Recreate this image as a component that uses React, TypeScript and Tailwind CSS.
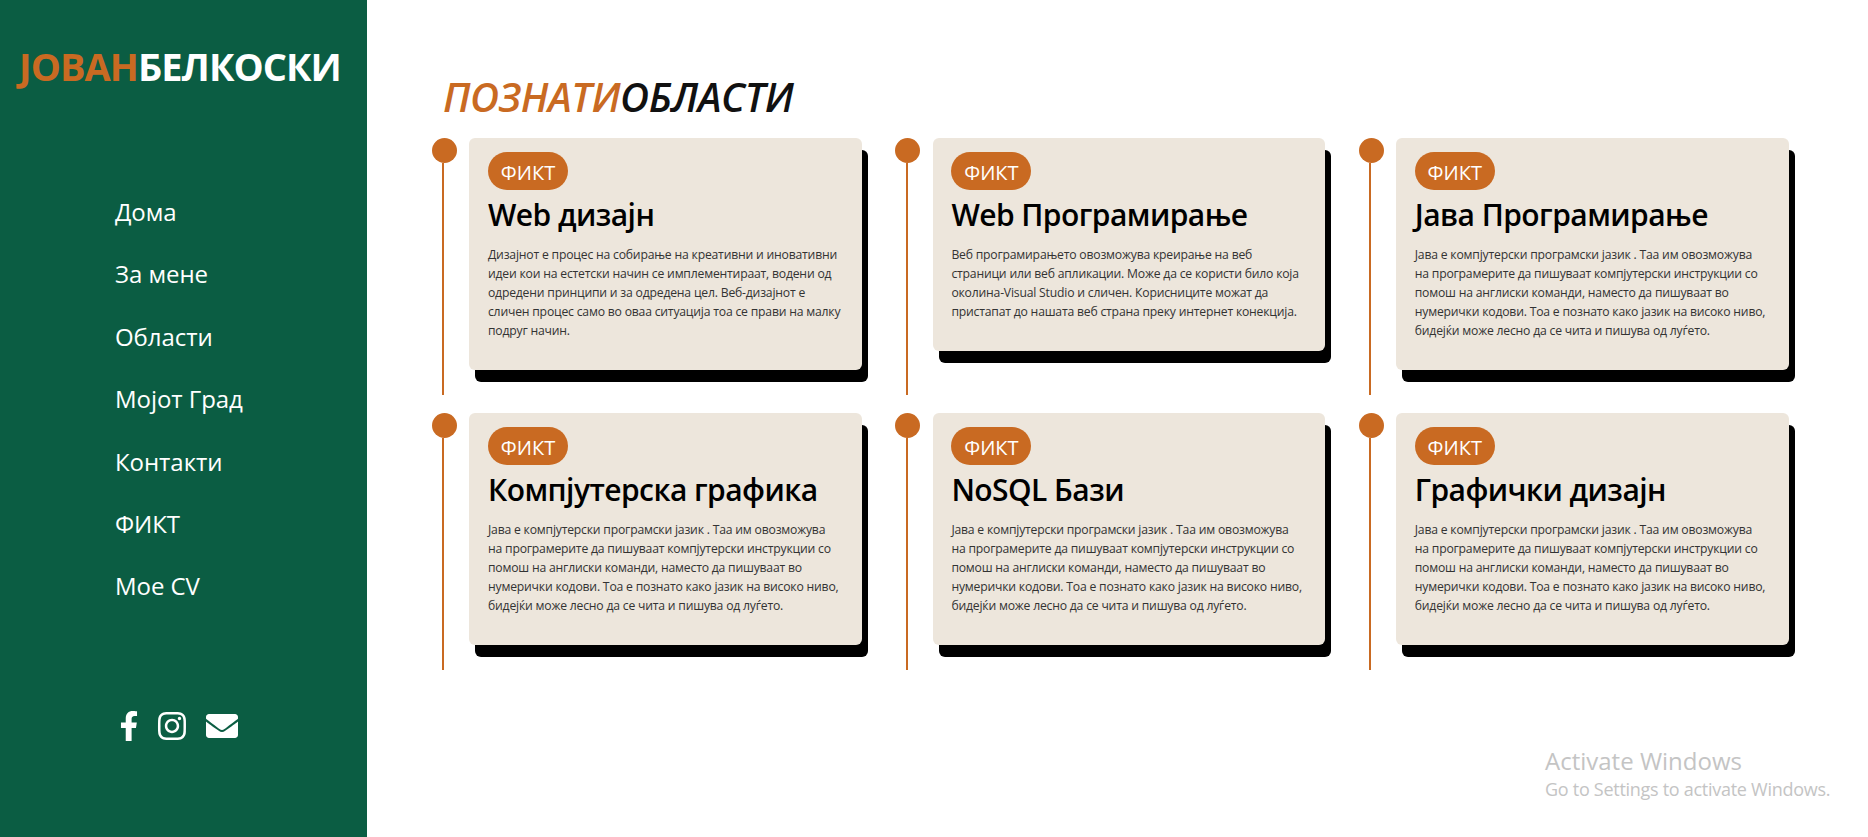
import React from 'react';
import { FaFacebookF, FaInstagram, FaEnvelope } from 'react-icons/fa';

const JAVA_TEXT = 'Јава е компјутерски програмски јазик . Таа им овозможува на програмерите да пишуваат компјутерски инструкции со помош на англиски команди, наместо да пишуваат во нумерички кодови. Тоа е познато како јазик на високо ниво, бидејќи може лесно да се чита и пишува од луѓето.';

const navLinks = ['Дома', 'За мене', 'Области', 'Мојот Град', 'Контакти', 'ФИКТ', 'Мое CV'];

const cards = [
  {
    title: 'Web дизајн',
    text: 'Дизајнот е процес на собирање на креативни и иновативни идеи кои на естетски начин се имплементираат, водени од одредени принципи и за одредена цел. Веб-дизајнот е сличен процес само во оваа ситуација тоа се прави на малку подруг начин.',
  },
  {
    title: 'Web Програмирање',
    text: 'Веб програмирањето овозможува креирање на веб страници или веб апликации. Може да се користи било која околина-Visual Studio и сличен. Корисниците можат да пристапат до нашата веб страна преку интернет конекција.',
  },
  { title: 'Јава Програмирање', text: JAVA_TEXT },
  { title: 'Компјутерска графика', text: JAVA_TEXT },
  { title: 'NoSQL Бази', text: JAVA_TEXT },
  { title: 'Графички дизајн', text: JAVA_TEXT },
];

const AreaCard = ({ title, text }: { title: string; text: string }) => (
  <div className="flex h-[257px] gap-[12.3px]">
    {/* timeline */}
    <div className="flex w-[25px] shrink-0 flex-col">
      <div className="h-[25px] w-[25px] rounded-full bg-[#c96a22]" />
      <div className="ml-[10.4px] w-[2px] flex-1 bg-[#c96a22]" />
    </div>
    <div className="w-[392.7px] self-start rounded-md bg-[#ede6dc] px-[18.7px] pt-[14px] pb-[20px] shadow-[6px_12px_0_#000]">
      <span className="inline-block h-[38px] w-[80px] rounded-[19px] bg-[#c96a22] text-center text-[20px] leading-[41px] text-white">
        ФИКТ
      </span>
      <h3 className="mt-[2px] text-[30px] leading-[45px] font-semibold tracking-[-0.55px] text-black">{title}</h3>
      <p className="mt-[8px] w-[353.5px] pb-[10px] text-[12.2px] leading-[19px] tracking-[-0.2px] text-[#333]">{text}</p>
    </div>
  </div>
);

export default function App() {
  return (
    <div className="relative flex h-[837px] w-full overflow-hidden bg-white font-['Open_Sans','Noto_Sans',sans-serif]">
      <aside className="flex w-[367px] shrink-0 flex-col bg-[#0b5d43]">
        <h1 className="mt-[41px] pl-[19px] text-[38px] leading-[50px] font-bold tracking-[-0.95px] whitespace-nowrap text-white">
          <span className="text-[#c96a22]">JOВАН</span>БЕЛКОСКИ
        </h1>
        <nav className="mt-[90px] flex flex-col pl-[115px]">
          {navLinks.map((link) => (
            <a key={link} className="h-[62.4px] text-[24px] leading-[62px] tracking-[-0.05px] text-white">
              {link}
            </a>
          ))}
        </nav>
        <div className="mt-[92px] flex items-center pl-[119px] text-white">
          <FaFacebookF className="h-[30px] w-[20px]" />
          <FaInstagram className="ml-[17px] h-[32px] w-[32px]" />
          <FaEnvelope className="ml-[18px] h-[32px] w-[32px]" />
        </div>
      </aside>

      <main className="flex-1 pl-[65px]">
        <h2 className="mt-[72px] pl-[11px] text-[40px] leading-[50px] font-semibold tracking-[-0.45px] text-[#111] italic">
          <span className="text-[#c96a22]">ПОЗНАТИ</span>ОБЛАСТИ
        </h2>
        <div className="mt-[16px] grid grid-cols-[repeat(3,463.4px)] gap-y-[18px]">
          {cards.map((card) => (
            <AreaCard key={card.title} title={card.title} text={card.text} />
          ))}
        </div>
      </main>

      {/* windows watermark */}
      <div className="absolute top-[745px] left-[1545px] text-[#c4c4c4]">
        <div className="text-[24px] leading-[32px]">Activate Windows</div>
        <div className="text-[18px] leading-[24px] tracking-[-0.28px]">Go to Settings to activate Windows.</div>
      </div>
    </div>
  );
}
